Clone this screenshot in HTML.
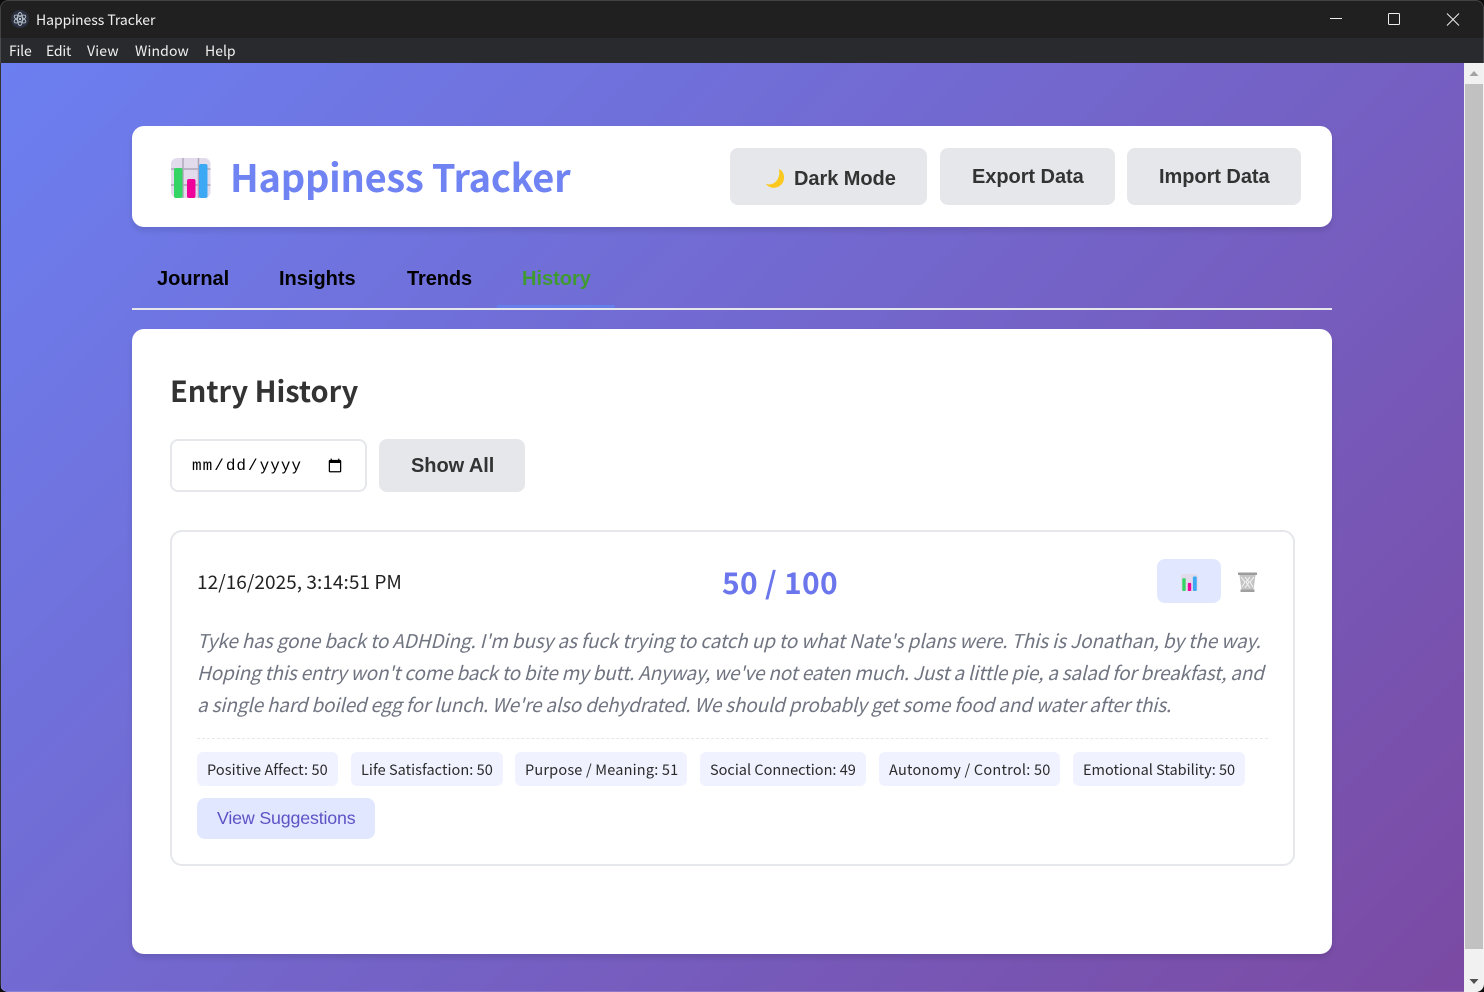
<!DOCTYPE html>
<html><head><meta charset="utf-8"><style>
html,body{margin:0;padding:0;width:1484px;height:992px;overflow:hidden;background:#0c0c0c}
*{box-sizing:border-box}
#w{position:absolute;left:0;top:0;width:1484px;height:992px;overflow:hidden;border-radius:8px}
.a{position:absolute;white-space:nowrap}
.s{font-family:"Noto Sans CJK JP","Liberation Sans",sans-serif}
.l{font-family:"Liberation Sans",sans-serif}
.btn{position:absolute;background:#e5e7eb;border-radius:8px}
.txtb{font-family:"Liberation Sans",sans-serif;font-weight:700;font-size:20px;color:#333;line-height:24px;letter-spacing:-.05px}
.tab{font-family:"Liberation Sans",sans-serif;font-weight:700;font-size:20px;color:#000;line-height:24px;top:267px}
.chip{position:absolute;top:752px;height:34px;background:#f0f2ff;border-radius:6px}
.cht{top:753px;line-height:34px;font-size:14.5px;color:#2b2b2b}
.j{font-family:"Noto Sans CJK JP","Liberation Sans",sans-serif;font-style:italic;font-size:19px;color:#6f7480;line-height:32px;font-weight:400}
.m{line-height:21px;font-size:14px;color:#f0f0f0;top:41px}
</style></head><body><div id="w">
<div class="a" style="left:0;top:0;width:1484px;height:38px;background:#202020"></div>
<div class="a" style="left:0;top:38px;width:1484px;height:25px;background:#292a2e"></div>
<svg class="a" style="left:11px;top:10px" width="18" height="18" viewBox="0 0 18 18"><circle cx="9" cy="9" r="9" fill="#2c3140"/><g fill="none" stroke="#b8c4ce" stroke-width=".9"><ellipse cx="9" cy="9" rx="6.5" ry="2.6" transform="rotate(30 9 9)"/><ellipse cx="9" cy="9" rx="6.5" ry="2.6" transform="rotate(90 9 9)"/><ellipse cx="9" cy="9" rx="6.5" ry="2.6" transform="rotate(150 9 9)"/></g><circle cx="9" cy="9" r="1.2" fill="#b8c4ce"/></svg>
<div class="a s" style="left:36px;top:10px;line-height:21px;font-size:14px;color:#f0f0f0;letter-spacing:-.05px">Happiness Tracker</div>
<div class="a s m" style="left:9px;letter-spacing:-.2px">File</div>
<div class="a s m" style="left:46px;letter-spacing:-.2px">Edit</div>
<div class="a s m" style="left:87px;letter-spacing:.2px">View</div>
<div class="a s m" style="left:135px;letter-spacing:.15px">Window</div>
<div class="a s m" style="left:205px">Help</div>
<svg class="a" style="left:1320px;top:8px" width="150" height="24" viewBox="0 0 150 24" fill="none" stroke="#eee" stroke-width="1"><path d="M10 10.5H22"/><rect x="68.500" y="5.500" width="11" height="11" rx="1"/><path d="M127 5.500L139 17.500M139 5.500L127 17.500"/></svg>

<div class="a" style="left:1px;top:63px;width:1463px;height:929px;background:linear-gradient(135deg,#6c7ff0 0%,#7b4aa3 100%)"></div>
<div class="a" style="left:1464px;top:63px;width:20px;height:929px;background:#f1f1f1"></div>
<div class="a" style="left:1465px;top:84px;width:18px;height:865px;background:#c1c1c1"></div>
<svg class="a" style="left:1464px;top:63px" width="20" height="20"><path d="M5.500 13H14.500L10 8z" fill="#a3a3a3"/></svg>
<svg class="a" style="left:1464px;top:972px" width="20" height="20"><path d="M5.500 7H14.500L10 12z" fill="#505050"/></svg>

<div class="a" style="left:132px;top:126px;width:1200px;height:101px;background:#fff;border-radius:12px;box-shadow:0 4px 6px rgba(0,0,0,.1)"></div>
<svg class="a" style="left:171px;top:158px" width="40" height="40" viewBox="0 0 40 40"><rect width="39.500" height="40" rx="6" fill="#e1dbec"/><path d="M12 0V40M27.500 0V40M0 11H39.500M0 27H39.500" stroke="#aea5b8" stroke-width="1.400"/><rect x="3" y="10" width="8.500" height="30" rx="2" fill="#35d565"/><rect x="16" y="21" width="8.500" height="19" rx="2" fill="#f0009a"/><rect x="28" y="6" width="8.500" height="34" rx="2" fill="#3da9f5"/></svg>
<div class="a s" style="left:230px;top:146px;line-height:60px;font-size:38px;font-weight:700;color:#7083f3;letter-spacing:-.25px">Happiness Tracker</div>

<div class="btn" style="left:730px;top:148px;width:197px;height:57px"></div>
<svg class="a" style="left:764px;top:168px" width="22" height="21" viewBox="0 0 22 21"><path d="M15 1C18 2 20.500 6 20 10.500C19.500 16 15 20 9.500 19.800C6 19.700 3.200 18 1.800 15.500C3.500 16.500 6 16.800 8.500 15.800C13 14 16.500 8.500 15 1Z" fill="#fbc91e"/></svg>
<div class="a txtb" style="left:794px;top:167px">Dark Mode</div>
<div class="btn" style="left:940px;top:148px;width:175px;height:57px"></div>
<div class="a txtb" style="left:972px;top:165px">Export Data</div>
<div class="btn" style="left:1127px;top:148px;width:174px;height:57px"></div>
<div class="a txtb" style="left:1159px;top:165px">Import Data</div>

<div class="a tab" style="left:157px">Journal</div>
<div class="a tab" style="left:279px">Insights</div>
<div class="a tab" style="left:407px;letter-spacing:-.1px">Trends</div>
<div class="a tab" style="left:522px;color:#3f9a32">History</div>
<div class="a" style="left:497px;top:305px;width:118px;height:3px;background:#667eea"></div>
<div class="a" style="left:132px;top:308px;width:1200px;height:2px;background:#e5e7eb"></div>

<div class="a" style="left:132px;top:329px;width:1200px;height:625px;background:#fff;border-radius:12px;box-shadow:0 4px 6px rgba(0,0,0,.1)"></div>
<div class="a s" style="left:170px;top:366px;line-height:48px;font-size:29px;font-weight:700;color:#333;letter-spacing:-.05px">Entry History</div>

<input class="a" type="date" style="left:170px;top:439px;width:197px;height:53px;border:2px solid #e5e7eb;border-radius:8px;background:#fff;padding:0 20px 0 19px;font-family:'Liberation Mono',monospace;font-size:16px;letter-spacing:1px;color:#000;outline:none">
<div class="btn" style="left:379px;top:439px;width:146px;height:53px"></div>
<div class="a txtb" style="left:411px;top:454px">Show All</div>

<div class="a" style="left:170px;top:530px;width:1125px;height:336px;background:#fff;border:2px solid #e5e7eb;border-radius:12px"></div>
<div class="a s" style="left:197px;top:567px;line-height:30px;font-size:19px;color:#222;letter-spacing:.05px">12/16/2025, 3:14:51 PM</div>
<div class="a s" style="left:722px;top:559px;line-height:44px;font-size:30px;font-weight:700;color:#6b75ec;letter-spacing:.28px">50 / 100</div>
<div class="a" style="left:1157px;top:559px;width:64px;height:44px;background:#e0e7ff;border-radius:8px"></div>
<svg class="a" style="left:1181px;top:574px" width="17" height="17" viewBox="0 0 40 40"><rect width="40" height="40" rx="6" fill="#e1dbec"/><rect x="3" y="10" width="8" height="30" rx="2" fill="#35d565"/><rect x="16" y="21" width="8" height="19" rx="2" fill="#f0009a"/><rect x="28" y="6" width="9" height="34" rx="2" fill="#3da9f5"/></svg>
<svg class="a" style="left:1237px;top:571px" width="21" height="22" viewBox="0 0 21 22"><path d="M1 1.500H20V4H1z" fill="#9c9c9c"/><path d="M2.500 4L4.500 19H16.500L18.500 4Z" fill="#c4c4c4"/><path d="M4 6L8 11L5 16M8 6L12 11L8 17M13 6L9 11L13 17M17 6L13 11L16 16" stroke="#f1f1f1" stroke-width="1.100" fill="none"/><path d="M3.500 18.500H17.500V21H3.500z" fill="#a0a0a0"/></svg>

<div class="a j" style="left:197px;top:625px;letter-spacing:-.14px">Tyke has gone back to ADHDing. I'm busy as fuck trying to catch up to what Nate's plans were. This is Jonathan, by the way.</div>
<div class="a j" style="left:197px;top:657px;letter-spacing:-.21px">Hoping this entry won't come back to bite my butt. Anyway, we've not eaten much. Just a little pie, a salad for breakfast, and</div>
<div class="a j" style="left:197px;top:689px;letter-spacing:-.19px">a single hard boiled egg for lunch. We're also dehydrated. We should probably get some food and water after this.</div>
<div class="a" style="left:197px;top:738px;width:1071px;height:0;border-top:1px dashed #e5e7eb"></div>

<div class="chip" style="left:197px;width:141px"></div><div class="a s cht" style="left:207px;letter-spacing:.1px">Positive Affect: 50</div>
<div class="chip" style="left:351px;width:152px"></div><div class="a s cht" style="left:361px;letter-spacing:.05px">Life Satisfaction: 50</div>
<div class="chip" style="left:515px;width:172px"></div><div class="a s cht" style="left:525px;letter-spacing:.19px">Purpose / Meaning: 51</div>
<div class="chip" style="left:700px;width:166px"></div><div class="a s cht" style="left:710px">Social Connection: 49</div>
<div class="chip" style="left:879px;width:181px"></div><div class="a s cht" style="left:889px;letter-spacing:.23px">Autonomy / Control: 50</div>
<div class="chip" style="left:1073px;width:172px"></div><div class="a s cht" style="left:1083px">Emotional Stability: 50</div>

<div class="a" style="left:197px;top:798px;width:178px;height:41px;background:#e0e7ff;border-radius:8px"></div>
<div class="a l" style="left:217px;top:798px;line-height:40px;font-size:17.800px;color:#5f52c4;letter-spacing:-.16px">View Suggestions</div>
<div class="a" style="left:0;top:0;width:1484px;height:992px;border:1px solid rgba(255,255,255,.16);border-radius:8px;pointer-events:none"></div>
</div></body></html>
